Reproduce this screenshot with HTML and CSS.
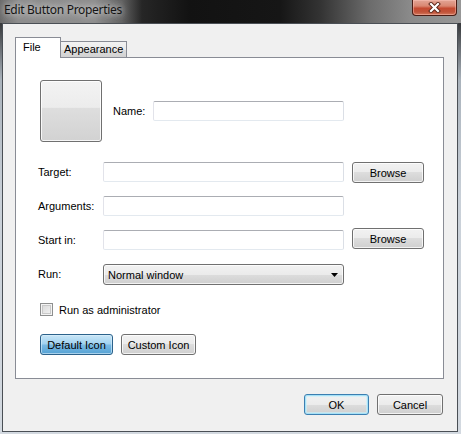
FILE: index.html
```html
<!DOCTYPE html>
<html>
<head>
<meta charset="utf-8">
<title>Edit Button Properties</title>
<link rel="stylesheet" href="styles.css">
</head>
<body>
<div class="window">
  <div class="titlebar">
    <span class="title">Edit Button Properties</span>
    <div class="close">
      <svg width="13" height="11" viewBox="0 0 13 11">
        <path d="M3 2 L10 9 M10 2 L3 9" stroke="#5a2418" stroke-width="4" stroke-linecap="square" fill="none"/>
        <path d="M3 2 L10 9 M10 2 L3 9" stroke="#ffffff" stroke-width="2.2" stroke-linecap="square" fill="none"/>
      </svg>
    </div>
  </div>
  <div class="client">
    <div class="tabs">
      <div class="tab active">File</div>
      <div class="tab">Appearance</div>
    </div>
    <div class="panel">
      <div class="icon-row">
        <div class="icon-preview"></div>
        <span class="name-label">Name:</span>
        <div class="input name-input"></div>
      </div>
      <div class="form">
        <span class="label">Target:</span>
        <div class="input"></div>
        <button class="btn">Browse</button>

        <span class="label">Arguments:</span>
        <div class="input"></div>
        <span></span>

        <span class="label">Start in:</span>
        <div class="input"></div>
        <button class="btn browse2">Browse</button>

        <span class="label">Run:</span>
        <div class="select">
          <span>Normal window</span>
          <svg width="7" height="4" viewBox="0 0 7 4"><path d="M0 0 H7 L3.5 4 Z" fill="#000"/></svg>
        </div>
        <span></span>
      </div>
      <div class="check-row">
        <span class="checkbox"></span>
        <span>Run as administrator</span>
      </div>
      <div class="icon-buttons">
        <button class="btn btn-pressed w73">Default Icon</button>
        <button class="btn w75">Custom Icon</button>
      </div>
    </div>
    <div class="footer">
      <button class="btn btn-default w65">OK</button>
      <button class="btn w66">Cancel</button>
    </div>
  </div>
</div>
</body>
</html>
```
FILE: styles.css
```css
* { box-sizing: border-box; }
html, body { margin: 0; padding: 0; }
body {
  width: 461px;
  height: 434px;
  overflow: hidden;
  font-family: "Liberation Sans", Arial, sans-serif;
  font-size: 11px;
  color: #000;
}
.window {
  width: 461px;
  height: 434px;
  display: flex;
  flex-direction: column;
  background: linear-gradient(to bottom, #2e2e2e 0, #3a3c3f 25px, #aab3bc 80px, #c9d0d8 200px, #d3d9e0 100%);
}
.titlebar {
  height: 23px;
  flex: none;
  display: flex;
  align-items: flex-start;
  background: linear-gradient(to right, #6a6a6a 0, #8d8d8d 18px, #8e8e8e 95px, #626262 122px, #262626 142px, #121212 190px, #161616 280px, #333333 320px, #6c6c6c 370px, #8a8a8a 410px, #979797 461px);
}
.title {
  font-family: "Noto Sans", "Open Sans", sans-serif;
  font-size: 12px;
  letter-spacing: -0.3px;
  line-height: 16px;
  margin: 2px 0 0 4px;
  color: #141414;
  text-shadow: 0 0 6px rgba(230,230,230,.9), 0 0 10px rgba(220,220,220,.8);
}
.close {
  margin-left: auto;
  margin-right: 4px;
  width: 45px;
  height: 16px;
  border: 1px solid #4a1c14;
  border-top: none;
  border-radius: 0 0 4px 4px;
  background: linear-gradient(#e2a596 0, #d98772 40%, #c44a31 55%, #c1533a 80%, #d37a5e 100%);
  box-shadow: inset 0 0 0 1px rgba(255,200,190,.45);
  display: flex;
  align-items: center;
  justify-content: center;
}
.client {
  flex: 1;
  margin: 0 3px 2px 2px;
  border: 1px solid #4a4f55;
  background: #f0f0f0;
  padding: 13px 13px 0 12px;
  display: flex;
  flex-direction: column;
}
.tabs {
  height: 20px;
  display: flex;
  align-items: flex-end;
  position: relative;
  z-index: 1;
}
.tab {
  border: 1px solid #898c95;
  border-bottom: none;
  line-height: 13px;
}
.tab.active {
  width: 46px;
  height: 21px;
  margin-bottom: -1px;
  background: #fff;
  padding: 3px 0 0 7px;
}
.tab:not(.active) {
  border-left: none;
  width: 66px;
  height: 16px;
  padding: 1px 0 0 3px;
  background: linear-gradient(#f2f2f2, #ebebeb 50%, #dddddd 50%, #d2d2d2);
}
.panel {
  width: 429px;
  height: 322px;
  background: #fff;
  border: 1px solid #898c95;
  padding: 22px 0 0 22px;
}
.icon-row {
  display: flex;
  align-items: center;
}
.icon-preview {
  width: 62px;
  height: 62px;
  margin-left: 2px;
  border: 1px solid #707070;
  border-radius: 3px;
  background: linear-gradient(#f3f3f3 0, #ececec 44%, #dedede 45%, #d2d2d2 100%);
  box-shadow: inset 0 0 0 1px rgba(255,255,255,.8);
}
.name-label {
  margin-left: 11px;
  width: 40px;
}
.input {
  height: 20px;
  background: #fff;
  border: 1px solid;
  border-color: #abadb3 #dbdfe6 #e3e9ef #e2e3ea;
  border-radius: 2px;
}
.name-input { width: 191px; }
.form {
  margin-top: 20px;
  display: grid;
  grid-template-columns: 57px 241px 72px;
  grid-template-rows: 20px 20px 20px 21px;
  column-gap: 8px;
  row-gap: 14px;
  align-items: start;
}
.label {
  line-height: 20px;
}
.btn {
  height: 21px;
  padding: 0;
  border: 1px solid #707070;
  border-radius: 3px;
  background: linear-gradient(#f2f2f2 0, #ebebeb 50%, #dddddd 50%, #cfcfcf 100%);
  box-shadow: inset 0 0 0 1px rgba(255,255,255,.75);
  font-family: "Liberation Sans", Arial, sans-serif;
  font-size: 11px;
  color: #000;
  line-height: 18px;
}
.browse2 { margin-top: -2px; }
.select {
  height: 21px;
  border: 1px solid #707070;
  border-radius: 3px;
  background: linear-gradient(#f2f2f2 0, #ebebeb 50%, #dddddd 50%, #cfcfcf 100%);
  box-shadow: inset 0 0 0 1px rgba(255,255,255,.75);
  display: flex;
  align-items: center;
  justify-content: space-between;
  padding: 0 5px 0 4px;
}
.check-row {
  margin-top: 18px;
  display: flex;
  align-items: center;
  padding-left: 2px;
  gap: 6px;
  height: 13px;
}
.checkbox {
  width: 13px;
  height: 13px;
  border: 1px solid #8e8f8f;
  background: linear-gradient(135deg, #d6d6d6, #f6f6f6);
  box-shadow: inset 0 0 0 1px #f4f4f4, inset 0 0 0 2px #c9c9c9;
}
.icon-buttons {
  margin-top: 18px;
  padding-left: 2px;
  display: flex;
  gap: 8px;
}
.w73 { width: 73px; }
.w75 { width: 75px; }
.w65 { width: 65px; }
.w66 { width: 66px; }
.btn-pressed {
  border-color: #2c628b;
  background: linear-gradient(#c9e6f7 0, #a3d3f0 45%, #78b8e3 55%, #55a2d4 100%);
  box-shadow: inset 0 0 0 1px rgba(220,240,252,.6);
}
.btn-default {
  border-color: #3c7fb1;
  box-shadow: inset 0 0 0 1px #a6e1f7, inset 0 0 0 2px rgba(200,240,252,.6);
}
.footer {
  margin-top: 15px;
  margin-right: 1px;
  display: flex;
  justify-content: flex-end;
  gap: 8px;
}
```
